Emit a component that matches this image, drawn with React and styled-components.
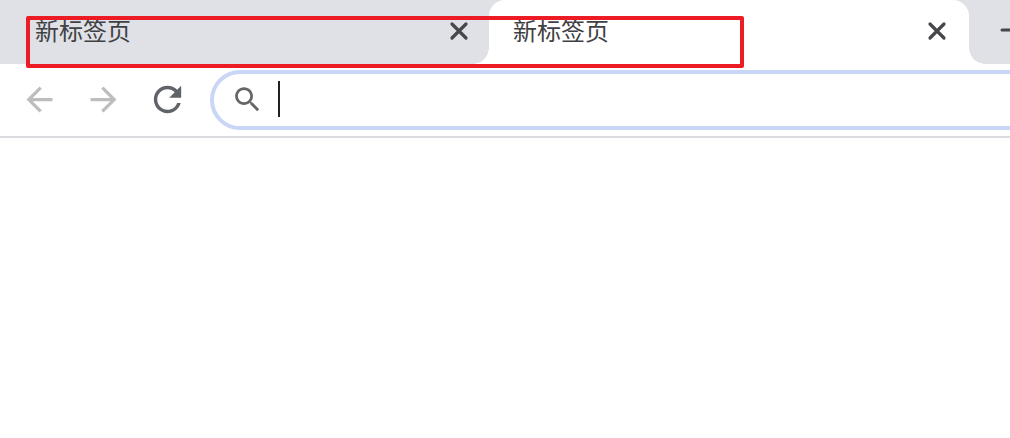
import React from 'react';
import styled, { createGlobalStyle } from 'styled-components';

const GlobalStyle = createGlobalStyle`
  html, body {
    margin: 0;
    padding: 0;
    background: #fff;
    overflow: hidden;
  }
`;

const Window = styled.div`
  position: relative;
  width: 1010px;
  height: 438px;
  overflow: hidden;
  background: #fff;
  font-family: "Noto Sans CJK SC", "Liberation Sans", sans-serif;
`;

const TabStrip = styled.div`
  display: flex;
  height: 64px;
  background: #dfe1e6;
`;

const Tab = styled.div`
  position: relative;
  flex: none;
  display: flex;
  align-items: center;
  justify-content: space-between;
  box-sizing: border-box;
  width: ${p => p.$width}px;
  padding: 0 ${p => p.$right}px 0 ${p => p.$left}px;
  background: ${p => (p.$active ? '#fff' : 'transparent')};
  border-radius: 16px 16px 0 0;

  ${p => p.$active && `
    &::before, &::after {
      content: '';
      position: absolute;
      bottom: 0;
      width: 16px;
      height: 16px;
    }
    &::before {
      left: -16px;
      background: radial-gradient(circle at 0 0, transparent 15.5px, #fff 16px);
    }
    &::after {
      right: -16px;
      background: radial-gradient(circle at 100% 0, transparent 15.5px, #fff 16px);
    }
  `}
`;

const TabTitle = styled.span`
  font-size: 24px;
  line-height: 32px;
  margin-top: -4px;
  color: #3f4144;
`;

const CloseIcon = styled.svg`
  flex: none;
  width: 20px;
  height: 20px;
  margin-top: -3px;
  stroke: #45474a;
  stroke-width: 3.2;
  stroke-linecap: round;
`;

const NewTab = styled.div`
  flex: none;
  margin-left: 31px;
  margin-top: -4px;
  align-self: center;
  line-height: 0;
`;

const PlusIcon = styled.svg`
  width: 24px;
  height: 24px;
  stroke: #45474a;
  stroke-width: 3;
  stroke-linecap: round;
`;

const Toolbar = styled.div`
  display: flex;
  align-items: center;
  height: 71px;
  padding: 0 0 1px 7px;
  background: #fff;
  border-bottom: 2px solid #dadce0;
`;

const NavButton = styled.div`
  flex: none;
  display: flex;
  align-items: center;
  justify-content: center;
  width: 64px;
  height: 60px;
`;

const NavIcon = styled.svg`
  width: ${p => p.$size}px;
  height: ${p => p.$size}px;
  fill: ${p => p.$color};
`;

const Omnibox = styled.div`
  flex: none;
  display: flex;
  align-items: center;
  box-sizing: border-box;
  width: 900px;
  height: 60px;
  margin-left: 11px;
  padding-left: 17px;
  border: 4px solid #c9d6f6;
  border-radius: 30px;
`;

const SearchIcon = styled.svg`
  flex: none;
  width: 33px;
  height: 33px;
  fill: #646668;
`;

const Caret = styled.div`
  flex: none;
  width: 2px;
  height: 36px;
  margin: -2px 0 0 14px;
  background: #202124;
`;

const Annotation = styled.div`
  position: absolute;
  left: 26px;
  top: 16px;
  width: 718px;
  height: 52px;
  box-sizing: border-box;
  border: 4px solid #ed1c24;
  border-radius: 2px;
`;

const Close = () => (
  <CloseIcon viewBox="0 0 20 20">
    <path d="M3 3 L17 17 M17 3 L3 17" fill="none" />
  </CloseIcon>
);

export default function App() {
  return (
    <Window>
      <GlobalStyle />
      <TabStrip>
        <Tab $width={489} $left={35} $right={20}>
          <TabTitle>新标签页</TabTitle>
          <Close />
        </Tab>
        <Tab $active $width={480} $left={24} $right={22}>
          <TabTitle>新标签页</TabTitle>
          <Close />
        </Tab>
        <NewTab>
          <PlusIcon viewBox="0 0 24 24">
            <path d="M2 12 H22 M12 2 V22" fill="none" />
          </PlusIcon>
        </NewTab>
      </TabStrip>
      <Toolbar>
        <NavButton>
          <NavIcon $size={39} $color="#bdbdbd" viewBox="0 0 24 24">
            <path d="M20 11H7.83l5.59-5.59L12 4l-8 8 8 8 1.41-1.41L7.83 13H20v-2z" />
          </NavIcon>
        </NavButton>
        <NavButton>
          <NavIcon $size={39} $color="#bdbdbd" viewBox="0 0 24 24">
            <path d="M12 4l-1.41 1.41L16.17 11H4v2h12.17l-5.58 5.59L12 20l8-8z" />
          </NavIcon>
        </NavButton>
        <NavButton>
          <NavIcon $size={41} $color="#606367" viewBox="0 0 24 24">
            <path d="M17.65 6.35C16.2 4.9 14.21 4 12 4c-4.42 0-7.99 3.58-7.99 8s3.57 8 7.99 8c3.73 0 6.84-2.55 7.73-6h-2.08c-.82 2.33-3.04 4-5.65 4-3.31 0-6-2.69-6-6s2.69-6 6-6c1.66 0 3.14.69 4.22 1.78L13 11h7V4l-2.35 2.35z" />
          </NavIcon>
        </NavButton>
        <Omnibox>
          <SearchIcon viewBox="0 0 24 24">
            <path d="M15.5 14h-.79l-.28-.27C15.41 12.59 16 11.11 16 9.5 16 5.91 13.09 3 9.5 3S3 5.91 3 9.5 5.91 16 9.5 16c1.61 0 3.09-.59 4.23-1.57l.27.28v.79l5 4.99L20.49 19l-4.99-5zm-6 0C7.01 14 5 11.99 5 9.5S7.01 5 9.5 5 14 7.01 14 9.5 11.99 14 9.5 14z" />
          </SearchIcon>
          <Caret />
        </Omnibox>
      </Toolbar>
      <Annotation />
    </Window>
  );
}
